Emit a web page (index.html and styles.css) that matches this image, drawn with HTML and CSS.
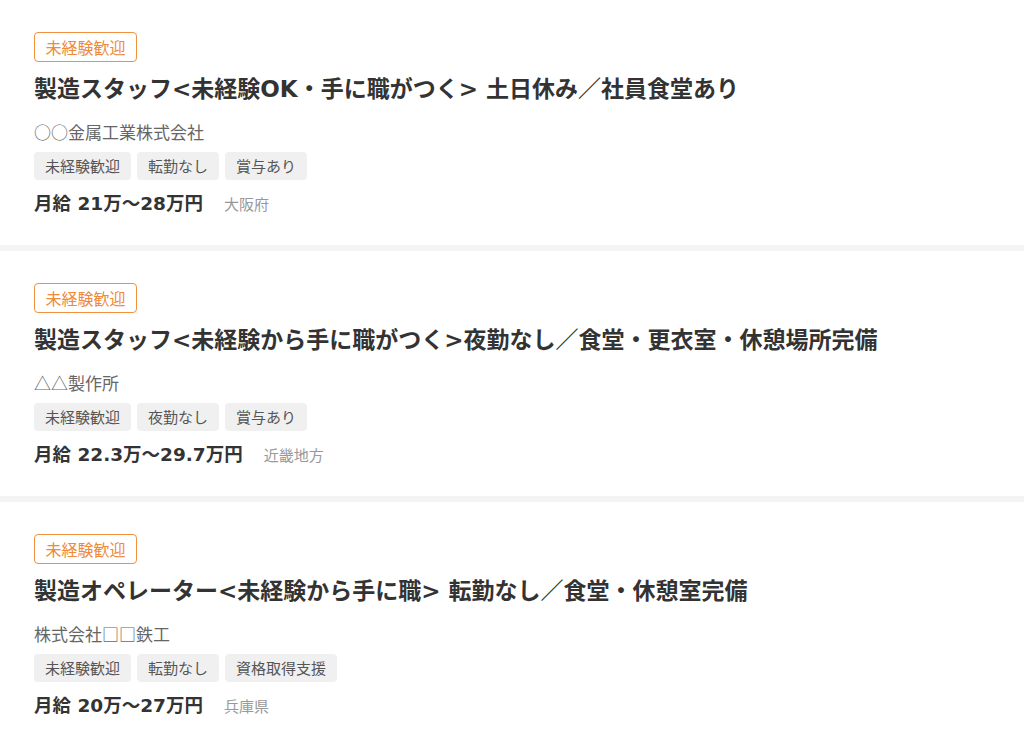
FILE: index.html
```html
<!DOCTYPE html>
<html lang="ja">
<head>
<meta charset="utf-8">
<link rel="stylesheet" href="styles.css">
</head>
<body>
<div class="list">
  <article class="card">
    <span class="badge">未経験歓迎</span>
    <h2 class="title">製造スタッフ&lt;未経験OK・手に職がつく&gt; 土日休み／社員食堂あり</h2>
    <p class="company">○○金属工業株式会社</p>
    <ul class="tags"><li>未経験歓迎</li><li>転勤なし</li><li>賞与あり</li></ul>
    <div class="meta"><span class="salary">月給 21万〜28万円</span><span class="loc">大阪府</span></div>
  </article>
  <article class="card">
    <span class="badge">未経験歓迎</span>
    <h2 class="title">製造スタッフ&lt;未経験から手に職がつく&gt;夜勤なし／食堂・更衣室・休憩場所完備</h2>
    <p class="company">△△製作所</p>
    <ul class="tags"><li>未経験歓迎</li><li>夜勤なし</li><li>賞与あり</li></ul>
    <div class="meta"><span class="salary">月給 22.3万〜29.7万円</span><span class="loc">近畿地方</span></div>
  </article>
  <article class="card">
    <span class="badge">未経験歓迎</span>
    <h2 class="title">製造オペレーター&lt;未経験から手に職&gt; 転勤なし／食堂・休憩室完備</h2>
    <p class="company">株式会社□□鉄工</p>
    <ul class="tags"><li>未経験歓迎</li><li>転勤なし</li><li>資格取得支援</li></ul>
    <div class="meta"><span class="salary">月給 20万〜27万円</span><span class="loc">兵庫県</span></div>
  </article>
</div>
</body>
</html>
```
FILE: styles.css
```css
* { box-sizing: border-box; }
body {
  margin: 0;
  background: #fff;
  font-family: "Noto Sans CJK JP", "Noto Sans", sans-serif;
  color: #333;
}
.list {
  display: flex;
  flex-direction: column;
  gap: 6px;
  background: #f4f4f4;
}
.card {
  background: #fff;
  padding: 32px 34px 0;
  height: 245px;
  display: flex;
  flex-direction: column;
  align-items: flex-start;
}
.badge {
  display: inline-block;
  border: 1.5px solid #f0913f;
  color: #ee8a3a;
  border-radius: 4px;
  font-size: 16px;
  line-height: 20px;
  padding: 4px 10.5px;
}
.title {
  margin: 11px 0 0;
  font-family: "DejaVu Sans", "Noto Sans CJK JP", sans-serif;
  font-size: 23px;
  line-height: 32px;
  font-weight: 700;
  color: #333;
}
.company {
  margin: 15px 0 0;
  font-size: 17px;
  line-height: 24px;
  color: #666;
}
.tags {
  list-style: none;
  margin: 8px 0 0;
  padding: 0;
  display: flex;
  gap: 6px;
}
.tags li {
  background: #f0f0f0;
  border-radius: 4px;
  font-size: 15px;
  line-height: 20px;
  padding: 4px 11px;
  color: #555;
}
.meta {
  margin-top: 12px;
  display: flex;
  align-items: baseline;
  gap: 21px;
}
.salary {
  font-family: "DejaVu Sans", "Noto Sans CJK JP", sans-serif;
  font-size: 18.5px;
  font-weight: 700;
  line-height: 24px;
  color: #333;
}
.loc {
  font-size: 15px;
  color: #999;
}
```
